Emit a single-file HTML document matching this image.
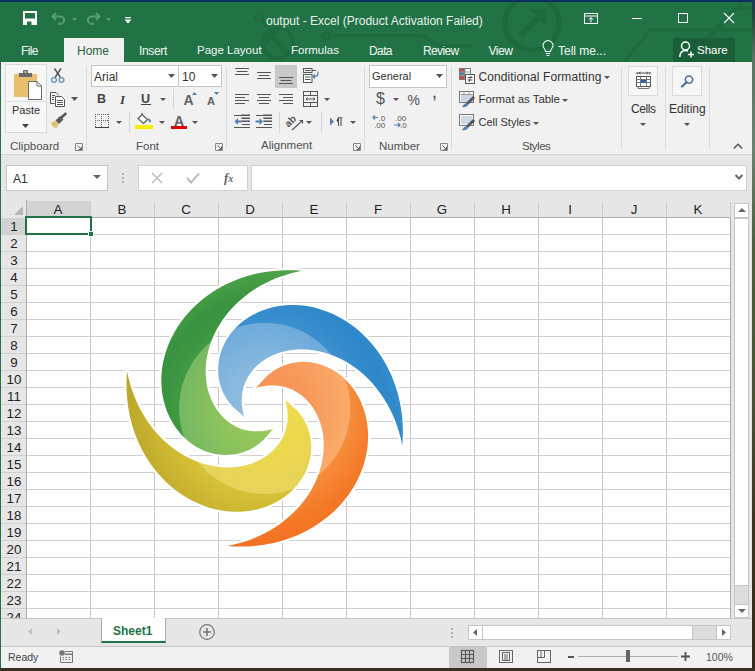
<!DOCTYPE html>
<html><head><meta charset="utf-8">
<style>
*{box-sizing:border-box;margin:0;padding:0}
html,body{width:755px;height:671px;overflow:hidden;background:#2f3a2c;font-family:"Liberation Sans",sans-serif}
.a{position:absolute}
.t{position:absolute;white-space:nowrap;line-height:1}
svg{position:absolute;overflow:visible}
</style></head><body>
<!-- desktop strips -->
<div class="a" style="left:0;top:0;width:755px;height:2px;background:#0d2f5e"></div>
<div class="a" style="left:752px;top:0;width:3px;height:671px;background:linear-gradient(#1a3a5a 0px,#24443a 15px,#5d7565 60px,#6b8070 150px,#4c5e3e 250px,#4a5236 400px,#3c3424 520px,#33291c 671px)"></div>
<div class="a" style="left:0;top:668px;width:755px;height:3px;background:#3a3122"></div>

<!-- window -->
<div class="a" id="win" style="left:0;top:2px;width:752px;height:666px;background:#e6e6e6;overflow:hidden">
</div>


<!-- title bar -->
<div class="a" style="left:0;top:2px;width:752px;height:60px;background:#217346;overflow:hidden">
<svg style="left:0;top:-2px" width="752" height="62" viewBox="0 0 752 62">
 <g fill="none" stroke="#1e6b40" stroke-width="3">
  <circle cx="532" cy="23" r="27" stroke-width="5" stroke="#1c6a3e"/>
  <path d="M521 35 L538 18" stroke-width="6" stroke="#1c6a3e"/>
  <path d="M529 9 H546 V26 Z" fill="#1c6a3e" stroke="none"/>
  <circle cx="259" cy="17" r="3.5"/>
  <path d="M261.5 19.5 L268 28" />
  <circle cx="278" cy="43" r="15" stroke-width="4"/>
  <path d="M290 55 L272 37" stroke-width="5"/>
  <path d="M266 31 H279 L266 44 Z" fill="#1e6b40" stroke="none"/>
  <circle cx="327" cy="35.5" r="3"/>
  <path d="M330 35.5 H423 L438 46 H472" />
  <path d="M624 62 L650 30 H752" />
  <path d="M690 62 L735 8 H752" />
  <path d="M705 40 L745 0" />
 </g>
</svg>
</div>
<div class="a" style="left:0;top:2px;width:1px;height:666px;background:#217346"></div>
<!-- QAT -->
<svg style="left:23px;top:11px" width="14" height="14" viewBox="0 0 14 14">
 <path d="M0 0 H14 V14 H0 Z M2 2 V7.5 H12 V2 Z M4 10.5 V14 H8.5 V10.5 Z" fill="#fff" fill-rule="evenodd"/>
</svg>
<svg style="left:51px;top:12px" width="26" height="13" viewBox="0 0 26 13">
 <path d="M5 1 L1.5 4.5 L5 8 M2 4.5 H9.5 A3.6 3.6 0 0 1 9.5 11.7 H7" fill="none" stroke="#5a9c75" stroke-width="2"/>
 <path d="M21 6 H26 L23.5 9 Z" fill="#5a9c75"/>
</svg>
<svg style="left:86px;top:12px" width="26" height="13" viewBox="0 0 26 13">
 <path d="M10 1 L13.5 4.5 L10 8 M13 4.5 H5.5 A3.6 3.6 0 0 0 5.5 11.7 H8" fill="none" stroke="#5a9c75" stroke-width="2"/>
 <path d="M20 6 H25 L22.5 9 Z" fill="#5a9c75"/>
</svg>
<svg style="left:124px;top:16px" width="8" height="8" viewBox="0 0 8 8">
 <rect x="1" y="1" width="6" height="1.3" fill="#fff"/>
 <path d="M0.5 3.5 H7.5 L4 7.5 Z" fill="#fff"/>
</svg>
<div class="t" style="left:266px;top:15px;font-size:12px;color:#e9f1ec">output - Excel (Product Activation Failed)</div>
<!-- window controls -->
<svg style="left:584px;top:13px" width="14" height="11" viewBox="0 0 14 11">
 <rect x="0.5" y="0.5" width="13" height="10" fill="none" stroke="#fff" stroke-width="1"/>
 <path d="M0.5 3 H13.5" stroke="#fff" stroke-width="1"/>
 <path d="M7 9.5 V4.5 M4.8 6.7 L7 4.5 L9.2 6.7" fill="none" stroke="#fff" stroke-width="1"/>
</svg>
<div class="a" style="left:632px;top:18px;width:10px;height:1px;background:#fff"></div>
<div class="a" style="left:678px;top:13px;width:10px;height:10px;border:1px solid #fff"></div>
<svg style="left:724px;top:13px" width="10" height="10" viewBox="0 0 10 10">
 <path d="M0 0 L10 10 M10 0 L0 10" stroke="#fff" stroke-width="1.1"/>
</svg>
<!-- tabs -->
<div class="a" style="left:64px;top:38px;width:60px;height:24px;background:#f1f1f1"></div>
<div class="t" style="left:21px;top:44.5px;font-size:12px;letter-spacing:-0.6px;color:#f2f7f4">File</div>
<div class="t" style="left:77px;top:44.5px;font-size:12px;color:#2a6040">Home</div>
<div class="t" style="left:139px;top:44.5px;font-size:12px;letter-spacing:-0.35px;color:#f2f7f4">Insert</div>
<div class="t" style="left:197px;top:44.5px;font-size:11.5px;color:#f2f7f4">Page Layout</div>
<div class="t" style="left:291px;top:44.5px;font-size:11.5px;color:#f2f7f4">Formulas</div>
<div class="t" style="left:369px;top:44.5px;font-size:12px;letter-spacing:-0.6px;color:#f2f7f4">Data</div>
<div class="t" style="left:423px;top:44.5px;font-size:12px;letter-spacing:-0.65px;color:#f2f7f4">Review</div>
<div class="t" style="left:488.5px;top:44.5px;font-size:12px;letter-spacing:-0.5px;color:#f2f7f4">View</div>
<svg style="left:542px;top:41px" width="12" height="16" viewBox="0 0 12 16">
 <path d="M3.5 10.5 C3.5 8 1 7 1 4.6 A5 5 0 0 1 11 4.6 C11 7 8.5 8 8.5 10.5 Z" fill="none" stroke="#f2f7f4" stroke-width="1.1"/>
 <path d="M3.8 12.5 H8.2 M4.5 14.5 H7.5" stroke="#f2f7f4" stroke-width="1.1"/>
</svg>
<div class="t" style="left:558px;top:44.5px;font-size:12px;color:#f2f7f4">Tell me...</div>
<div class="a" style="left:673px;top:38px;width:62px;height:24px;background:#1a5f38"></div>
<svg style="left:679px;top:41px" width="16" height="17" viewBox="0 0 16 17">
 <circle cx="6.5" cy="5" r="4" fill="none" stroke="#fff" stroke-width="1.5"/>
 <path d="M0.8 16 C1 11.5 3.2 9.5 6.5 9.5 C7.5 9.5 8.3 9.7 9 10" fill="none" stroke="#fff" stroke-width="1.5"/>
 <path d="M12 10.5 V16.5 M9 13.5 H15" stroke="#fff" stroke-width="1.5"/>
</svg>
<div class="t" style="left:697px;top:44.5px;font-size:11.5px;color:#fff">Share</div>


<!-- ribbon -->
<div class="a" style="left:1px;top:62px;width:751px;height:92px;background:#f1f1f1"></div>
<div class="a" style="left:1px;top:154px;width:751px;height:1px;background:#d5d5d5"></div>
<!-- group separators -->
<div class="a" style="left:86px;top:66px;width:1px;height:84px;background:#dcdcdc"></div>
<div class="a" style="left:226px;top:66px;width:1px;height:84px;background:#dcdcdc"></div>
<div class="a" style="left:364px;top:66px;width:1px;height:84px;background:#dcdcdc"></div>
<div class="a" style="left:451px;top:66px;width:1px;height:84px;background:#dcdcdc"></div>
<div class="a" style="left:621px;top:66px;width:1px;height:84px;background:#dcdcdc"></div>
<div class="a" style="left:665px;top:66px;width:1px;height:84px;background:#dcdcdc"></div>
<div class="a" style="left:709px;top:66px;width:1px;height:84px;background:#dcdcdc"></div>
<!-- group labels -->
<div class="t" style="left:10px;top:141px;font-size:11.5px;color:#505050">Clipboard</div>
<div class="t" style="left:136px;top:141px;font-size:11.5px;color:#505050">Font</div>
<div class="t" style="left:261px;top:140px;font-size:11.5px;color:#505050">Alignment</div>
<div class="t" style="left:379px;top:140.5px;font-size:11.5px;color:#505050">Number</div>
<div class="t" style="left:522px;top:141px;font-size:11.5px;letter-spacing:-0.5px;color:#505050">Styles</div>
<!-- dialog launchers -->
<svg style="left:75px;top:143px" width="8" height="8" viewBox="0 0 8 8"><path d="M0.5 7.5 V0.5 H7.5 V7.5 Z" fill="none" stroke="#8a8a8a" stroke-width="1"/><path d="M2.5 2.5 L6.5 6.5 M3.5 6.5 H6.5 V3.5" fill="none" stroke="#666" stroke-width="1"/></svg>
<svg style="left:215px;top:143px" width="8" height="8" viewBox="0 0 8 8"><path d="M0.5 7.5 V0.5 H7.5 V7.5 Z" fill="none" stroke="#8a8a8a" stroke-width="1"/><path d="M2.5 2.5 L6.5 6.5 M3.5 6.5 H6.5 V3.5" fill="none" stroke="#666" stroke-width="1"/></svg>
<svg style="left:353px;top:143px" width="8" height="8" viewBox="0 0 8 8"><path d="M0.5 7.5 V0.5 H7.5 V7.5 Z" fill="none" stroke="#8a8a8a" stroke-width="1"/><path d="M2.5 2.5 L6.5 6.5 M3.5 6.5 H6.5 V3.5" fill="none" stroke="#666" stroke-width="1"/></svg>
<svg style="left:440px;top:143px" width="8" height="8" viewBox="0 0 8 8"><path d="M0.5 7.5 V0.5 H7.5 V7.5 Z" fill="none" stroke="#8a8a8a" stroke-width="1"/><path d="M2.5 2.5 L6.5 6.5 M3.5 6.5 H6.5 V3.5" fill="none" stroke="#666" stroke-width="1"/></svg>
<!-- collapse -->
<svg style="left:733px;top:143px" width="10" height="6" viewBox="0 0 10 6"><path d="M0.8 5.5 L5 1.2 L9.2 5.5" fill="none" stroke="#555" stroke-width="1.5"/></svg>

<!-- Clipboard -->
<div class="a" style="left:5px;top:64px;width:42px;height:69px;border:1px solid #d9d9d9;background:#f7f7f7"></div>
<div class="a" style="left:6px;top:101px;width:40px;height:1px;background:#dedede"></div>
<svg style="left:13px;top:69px" width="30" height="32" viewBox="0 0 30 32">
 <rect x="1" y="5" width="23" height="23" rx="1" fill="#e8bf6a"/>
 <path d="M6 4 H19 V8 H6 Z" fill="#6b6b6b"/>
 <rect x="10" y="1" width="5" height="4" rx="1" fill="#6b6b6b"/>
 <rect x="11.5" y="2" width="2" height="2" fill="#e8bf6a"/>
 <path d="M15.5 12.5 H24 L28.5 17 V30.5 H15.5 Z" fill="#fff" stroke="#6b6b6b" stroke-width="1"/>
 <path d="M24 12.5 V17 H28.5" fill="none" stroke="#6b6b6b" stroke-width="1"/>
</svg>
<div class="t" style="left:12px;top:105px;font-size:11px;color:#333">Paste</div>
<svg style="left:22px;top:124px" width="7" height="4" viewBox="0 0 7 4"><path d="M0 0 H7 L3.5 4 Z" fill="#444"/></svg>
<svg style="left:50px;top:68px" width="16" height="16" viewBox="0 0 16 16">
 <path d="M4.5 0.5 L10.5 9.5 M11 0.5 L5 9.5" stroke="#555" stroke-width="1.4"/>
 <circle cx="4" cy="12" r="2.4" fill="none" stroke="#6d8fb5" stroke-width="1.3"/>
 <circle cx="11.5" cy="12" r="2.4" fill="none" stroke="#6d8fb5" stroke-width="1.3"/>
</svg>
<svg style="left:50px;top:92px" width="16" height="15" viewBox="0 0 16 15">
 <path d="M0.5 0.5 H6 L8 2.5 V3.5 M0.5 0.5 V11.5 H4.5" fill="none" stroke="#555" stroke-width="1"/>
 <path d="M5.5 4.5 H11.5 L14.5 7.5 V14.5 H5.5 Z" fill="#fff" stroke="#555" stroke-width="1"/>
 <path d="M2 3.5 H5 M2 5.5 H4 M2 7.5 H4 M7 8.5 H13 M7 10.5 H13 M7 12.5 H13" stroke="#555" stroke-width="1"/>
</svg>
<svg style="left:71px;top:97px" width="7" height="4" viewBox="0 0 7 4"><path d="M0 0 H7 L3.5 4 Z" fill="#555"/></svg>
<svg style="left:50px;top:113px" width="17" height="16" viewBox="0 0 17 16">
 <path d="M11.5 4.5 L15.5 0.8" stroke="#555" stroke-width="2.6" stroke-linecap="round"/>
 <path d="M5.5 7.5 L10 3 L13.5 6.5 L9 11 Z" fill="#5a5a5a"/>
 <path d="M0.5 10 L5.5 7.5 L9 11 L6.5 15.5 C4 15 2 13 0.5 10 Z" fill="#e6c47f"/>
 <path d="M3 12 L7 9" stroke="#d2ad63" stroke-width="1"/>
</svg>


<!-- Font group -->
<div class="a" style="left:91px;top:65px;width:88px;height:22px;border:1px solid #c6c6c6;background:#fff"></div>
<div class="a" style="left:178px;top:65px;width:44px;height:22px;border:1px solid #c6c6c6;background:#fff"></div>
<div class="t" style="left:94px;top:71px;font-size:12px;color:#333">Arial</div>
<div class="t" style="left:182px;top:71px;font-size:12px;color:#333">10</div>
<svg style="left:168px;top:74px" width="7" height="4" viewBox="0 0 7 4"><path d="M0 0 H7 L3.5 4 Z" fill="#555"/></svg>
<svg style="left:211px;top:74px" width="7" height="4" viewBox="0 0 7 4"><path d="M0 0 H7 L3.5 4 Z" fill="#555"/></svg>
<div class="t" style="left:97px;top:93px;font-size:12.5px;font-weight:700;color:#444">B</div>
<div class="t" style="left:120px;top:93px;font-size:13px;font-style:italic;font-family:'Liberation Serif';font-weight:700;color:#444">I</div>
<div class="t" style="left:141px;top:92.5px;font-size:12.5px;font-weight:700;color:#444">U</div>
<div class="a" style="left:141px;top:104px;width:10px;height:1px;background:#444"></div>
<svg style="left:160px;top:98px" width="6" height="3" viewBox="0 0 6 3"><path d="M0 0 H6 L3 3 Z" fill="#555"/></svg>
<div class="a" style="left:173px;top:89px;width:1px;height:20px;background:#d6d6d6"></div>
<div class="t" style="left:183.5px;top:93px;font-size:14px;font-weight:700;color:#606060">A</div>
<svg style="left:192px;top:92px" width="5" height="3" viewBox="0 0 5 3"><path d="M0 3 H5 L2.5 0 Z" fill="#4f7fb0"/></svg>
<div class="t" style="left:207px;top:96px;font-size:11px;font-weight:700;color:#606060">A</div>
<svg style="left:214px;top:92px" width="5" height="3" viewBox="0 0 5 3"><path d="M0 0 H5 L2.5 3 Z" fill="#4f7fb0"/></svg>
<svg style="left:95px;top:114px" width="14" height="14" viewBox="0 0 14 14"><g fill="#666"><rect x="0" y="0" width="1" height="1"/><rect x="0" y="0" width="1" height="1"/><rect x="0" y="6" width="1" height="1"/><rect x="6" y="0" width="1" height="1"/><rect x="0" y="13" width="1" height="1"/><rect x="13" y="0" width="1" height="1"/><rect x="2" y="0" width="1" height="1"/><rect x="0" y="2" width="1" height="1"/><rect x="2" y="6" width="1" height="1"/><rect x="6" y="2" width="1" height="1"/><rect x="2" y="13" width="1" height="1"/><rect x="13" y="2" width="1" height="1"/><rect x="4" y="0" width="1" height="1"/><rect x="0" y="4" width="1" height="1"/><rect x="4" y="6" width="1" height="1"/><rect x="6" y="4" width="1" height="1"/><rect x="4" y="13" width="1" height="1"/><rect x="13" y="4" width="1" height="1"/><rect x="6" y="0" width="1" height="1"/><rect x="0" y="6" width="1" height="1"/><rect x="6" y="6" width="1" height="1"/><rect x="6" y="6" width="1" height="1"/><rect x="6" y="13" width="1" height="1"/><rect x="13" y="6" width="1" height="1"/><rect x="8" y="0" width="1" height="1"/><rect x="0" y="8" width="1" height="1"/><rect x="8" y="6" width="1" height="1"/><rect x="6" y="8" width="1" height="1"/><rect x="8" y="13" width="1" height="1"/><rect x="13" y="8" width="1" height="1"/><rect x="10" y="0" width="1" height="1"/><rect x="0" y="10" width="1" height="1"/><rect x="10" y="6" width="1" height="1"/><rect x="6" y="10" width="1" height="1"/><rect x="10" y="13" width="1" height="1"/><rect x="13" y="10" width="1" height="1"/><rect x="12" y="0" width="1" height="1"/><rect x="0" y="12" width="1" height="1"/><rect x="12" y="6" width="1" height="1"/><rect x="6" y="12" width="1" height="1"/><rect x="12" y="13" width="1" height="1"/><rect x="13" y="12" width="1" height="1"/></g><rect x="0" y="13" width="14" height="1" fill="#444"/></svg>
<svg style="left:116px;top:121px" width="6" height="3" viewBox="0 0 6 3"><path d="M0 0 H6 L3 3 Z" fill="#555"/></svg>
<div class="a" style="left:129px;top:112px;width:1px;height:21px;background:#d6d6d6"></div>
<svg style="left:137px;top:113px" width="17" height="12" viewBox="0 0 17 12">
 <path d="M5 1.5 L10.5 6.5 L6.5 10.5 L1 5.5 Z" fill="#fff" stroke="#555" stroke-width="1.1"/>
 <path d="M5 1.5 V0" stroke="#555" stroke-width="1.1"/>
 <path d="M11 5 C13 6 14.5 7.5 14 9 C13 9.5 12 9 11.5 8 Z" fill="#4f7fb0"/>
</svg>
<div class="a" style="left:135px;top:125px;width:18px;height:4px;background:#f5f000"></div>
<svg style="left:159px;top:121px" width="6" height="3" viewBox="0 0 6 3"><path d="M0 0 H6 L3 3 Z" fill="#555"/></svg>
<div class="t" style="left:174px;top:113.5px;font-size:14px;font-weight:700;color:#606060">A</div>
<div class="a" style="left:171px;top:126px;width:16px;height:3px;background:#e00000"></div>
<svg style="left:192px;top:121px" width="6" height="3" viewBox="0 0 6 3"><path d="M0 0 H6 L3 3 Z" fill="#555"/></svg>

<!-- Alignment group -->
<svg style="left:234px;top:67px" width="100" height="66" viewBox="0 0 100 66">
 <g stroke="#555" stroke-width="1.2" fill="none">
  <path d="M1 1.5 H15 M2.5 4.5 H13.5 M1 7.5 H15"/>
  <path d="M23 5.5 H37 M24.5 8.5 H35.5 M23 11.5 H37"/>
  <path d="M1 27.5 H15 M1 30.5 H11 M1 33.5 H15 M1 36.5 H11"/>
  <path d="M23 27.5 H37 M25 30.5 H35 M23 33.5 H37 M25 36.5 H35"/>
  <path d="M45 27.5 H59 M49 30.5 H59 M45 33.5 H59 M49 36.5 H59"/>
  <path d="M7 48 H16 M7 51 H16 M7 54 H16 M0 60.5 H16 M0 47 V47"/>
  <path d="M29 48 H38 M29 51 H38 M29 54 H38 M22 60.5 H38"/>
 </g>
</svg>
<div class="a" style="left:275px;top:65px;width:22px;height:23px;background:#c8c8c8"></div>
<svg style="left:278px;top:76px" width="16" height="10" viewBox="0 0 16 10"><path d="M1 1.5 H15 M2.5 4.5 H13.5 M1 7.5 H15" stroke="#555" stroke-width="1.2"/></svg>
<svg style="left:234px;top:67px" width="100" height="66" viewBox="0 0 100 66">
 <g stroke="#555" stroke-width="1.2" fill="none">
  <path d="M0 48.5 H16 M0 60.5 H16 M8 51.5 H16 M8 54.5 H16 M8 57.5 H16"/>
  <path d="M22 48.5 H38 M22 60.5 H38 M30 51.5 H38 M30 54.5 H38 M30 57.5 H38"/>
 </g>
 <path d="M0.5 54.5 L4 51 V58 Z" fill="#4f7fb0"/>
 <path d="M3 54.5 H7.5" stroke="#4f7fb0" stroke-width="2"/>
 <path d="M29 54.5 L25.5 51 V58 Z" fill="#4f7fb0"/>
 <path d="M21.5 54.5 H26" stroke="#4f7fb0" stroke-width="2"/>
</svg>
<svg style="left:303px;top:68px" width="16" height="15" viewBox="0 0 16 15">
 <rect x="0.5" y="0.5" width="8.5" height="4" fill="none" stroke="#555" stroke-width="1"/>
 <rect x="0.5" y="6.5" width="8.5" height="8" fill="#fff" stroke="#555" stroke-width="1"/>
 <path d="M2 2.5 H7.5 M9 2.5 H13 M2 9 H7.5 M2 11.5 H7.5" stroke="#555" stroke-width="1"/>
 <path d="M15 3.5 V5.5 C15 7.5 13.5 8.5 12 8.5 H10 M12 6.5 L10 8.5 L12 10.5" fill="none" stroke="#4f7fb0" stroke-width="1.2"/>
</svg>
<svg style="left:303px;top:91px" width="16" height="16" viewBox="0 0 16 16">
 <rect x="0.5" y="0.5" width="14" height="15" fill="none" stroke="#555" stroke-width="1"/>
 <path d="M0.5 4.5 H14.5 M0.5 11.5 H14.5 M7.5 0.5 V4.5 M7.5 11.5 V15.5" stroke="#555" stroke-width="1"/>
 <path d="M3 8 H12 M4.5 6.5 L3 8 L4.5 9.5 M10.5 6.5 L12 8 L10.5 9.5" fill="none" stroke="#555" stroke-width="1"/>
</svg>
<svg style="left:324px;top:98px" width="6" height="3" viewBox="0 0 6 3"><path d="M0 0 H6 L3 3 Z" fill="#555"/></svg>
<div class="a" style="left:279px;top:112px;width:1px;height:21px;background:#d6d6d6"></div>
<svg style="left:286px;top:114px" width="18" height="16" viewBox="0 0 18 16">
 <text x="-1.5" y="10" font-family="Liberation Sans" font-size="10" font-weight="700" fill="#555" transform="rotate(-45 5 7)">ab</text>
 <path d="M6 16 L16.5 6.5 M13.5 6.5 H16.5 V9.5" fill="none" stroke="#555" stroke-width="1.1"/>
</svg>
<svg style="left:306px;top:121px" width="6" height="3" viewBox="0 0 6 3"><path d="M0 0 H6 L3 3 Z" fill="#555"/></svg>
<div class="a" style="left:321px;top:112px;width:1px;height:21px;background:#d6d6d6"></div>
<svg style="left:330px;top:117px" width="14" height="9" viewBox="0 0 14 9">
 <path d="M0 0.5 L4 4.5 L0 8.5 Z" fill="#4f7fb0"/>
 <path d="M8.5 1 A2.3 2.3 0 0 0 8.5 5.5 Z" fill="#555"/>
 <path d="M8.5 0.8 V9 M11 0.8 V9 M8 0.8 H12.5" stroke="#555" stroke-width="1.1"/>
</svg>
<svg style="left:350px;top:121px" width="6" height="3" viewBox="0 0 6 3"><path d="M0 0 H6 L3 3 Z" fill="#555"/></svg>


<!-- Number group -->
<div class="a" style="left:369px;top:65px;width:78px;height:23px;border:1px solid #c6c6c6;background:#fff"></div>
<div class="t" style="left:372px;top:71px;font-size:11px;color:#333">General</div>
<svg style="left:436px;top:74px" width="7" height="4" viewBox="0 0 7 4"><path d="M0 0 H7 L3.5 4 Z" fill="#555"/></svg>
<div class="t" style="left:376px;top:91px;font-size:16px;color:#555">$</div>
<svg style="left:393px;top:98px" width="6" height="3" viewBox="0 0 6 3"><path d="M0 0 H6 L3 3 Z" fill="#555"/></svg>
<div class="t" style="left:407.5px;top:93px;font-size:14px;color:#555">%</div>
<div class="t" style="left:432.5px;top:86px;font-size:14px;font-weight:700;color:#555">,</div>
<svg style="left:372px;top:114px" width="38" height="15" viewBox="0 0 38 15">
 <path d="M1 3.5 H6 M3 1.5 L1 3.5 L3 5.5" fill="none" stroke="#4f7fb0" stroke-width="1.2"/>
 <text x="6.5" y="7" font-family="Liberation Sans" font-size="8" fill="#555">.0</text>
 <text x="2" y="14" font-family="Liberation Sans" font-size="8" fill="#555">.00</text>
 <text x="23" y="7" font-family="Liberation Sans" font-size="8" fill="#555">.00</text>
 <path d="M22 11 H28 M26 9 L28 11 L26 13" fill="none" stroke="#4f7fb0" stroke-width="1.2"/>
 <text x="28" y="14" font-family="Liberation Sans" font-size="8" fill="#555">.0</text>
</svg>

<!-- Styles group -->
<svg style="left:459px;top:68px" width="16" height="16" viewBox="0 0 16 16">
 <rect x="0.5" y="0.5" width="11" height="11" fill="#fff" stroke="#777" stroke-width="1"/>
 <rect x="1" y="1" width="5" height="3" fill="#c0504d"/>
 <rect x="1" y="4" width="5" height="3" fill="#4f7fb0"/>
 <rect x="1" y="7" width="5" height="4" fill="#c0504d"/>
 <path d="M6 0.5 V11.5 M0.5 4 H11.5 M0.5 7.5 H11.5" stroke="#999" stroke-width="1"/>
 <rect x="6.5" y="6.5" width="9" height="9" fill="#fff" stroke="#555" stroke-width="1"/>
 <path d="M8.5 9.5 H13.5 M8.5 12 H13.5 M12 8 L10 14" stroke="#555" stroke-width="1"/>
</svg>
<div class="t" style="left:478.5px;top:71px;font-size:12px;letter-spacing:0.1px;color:#333">Conditional Formatting</div>
<svg style="left:604px;top:76px" width="6" height="3" viewBox="0 0 6 3"><path d="M0 0 H6 L3 3 Z" fill="#555"/></svg>
<svg style="left:459px;top:91px" width="16" height="17" viewBox="0 0 16 17">
 <rect x="0.5" y="0.5" width="14" height="11" fill="#fff" stroke="#777" stroke-width="1"/>
 <path d="M0.5 3.5 H14.5 M5 0.5 V11.5 M10 0.5 V11.5" stroke="#999" stroke-width="1"/>
 <path d="M2 4 H14 V11 H2 Z" fill="#c9d7e6"/>
 <path d="M14 5 L16 7 L9 14 L7 12 Z" fill="#555"/>
 <path d="M7 12 L9 14 C8 16 5 16.5 3 16 C4 15 4.5 13 7 12 Z" fill="#4f7fb0"/>
</svg>
<div class="t" style="left:478.5px;top:94px;font-size:11.4px;color:#333">Format as Table</div>
<svg style="left:562px;top:99px" width="6" height="3" viewBox="0 0 6 3"><path d="M0 0 H6 L3 3 Z" fill="#555"/></svg>
<svg style="left:459px;top:114px" width="16" height="17" viewBox="0 0 16 17">
 <rect x="0.5" y="0.5" width="14" height="11" fill="#fff" stroke="#777" stroke-width="1"/>
 <path d="M2 2 H13 V10 H2 Z" fill="#c9d7e6"/>
 <path d="M14 5 L16 7 L9 14 L7 12 Z" fill="#555"/>
 <path d="M7 12 L9 14 C8 16 5 16.5 3 16 C4 15 4.5 13 7 12 Z" fill="#4f7fb0"/>
</svg>
<div class="t" style="left:478.5px;top:117px;font-size:11px;color:#333">Cell Styles</div>
<svg style="left:533px;top:122px" width="6" height="3" viewBox="0 0 6 3"><path d="M0 0 H6 L3 3 Z" fill="#555"/></svg>

<!-- Cells / Editing -->
<div class="a" style="left:628px;top:66px;width:30px;height:30px;border:1px solid #d9d9d9;background:#f7f7f7"></div>
<svg style="left:636px;top:72px" width="16" height="17" viewBox="0 0 16 17">
 <path d="M1 1 H14 M1 0 V2.5 M14 0 V2.5 M3 1 L4.5 0 M3 1 L4.5 2 M12 1 L10.5 0 M12 1 L10.5 2" stroke="#555" stroke-width="1" fill="none"/>
 <rect x="0.5" y="4.5" width="14" height="10" fill="#fff" stroke="#555" stroke-width="1"/>
 <path d="M0.5 7.5 H14.5 M0.5 10.5 H14.5 M4.5 4.5 V14.5 M10.5 4.5 V14.5" stroke="#777" stroke-width="1"/>
 <rect x="5" y="8" width="5" height="3" fill="#2f5f9e"/>
 <path d="M2 14.5 V16.5 H13 V14.5" fill="none" stroke="#777" stroke-width="1"/>
</svg>
<div class="t" style="left:631px;top:103px;font-size:12px;letter-spacing:-0.4px;color:#333">Cells</div>
<svg style="left:640px;top:123px" width="6" height="3" viewBox="0 0 6 3"><path d="M0 0 H6 L3 3 Z" fill="#555"/></svg>
<div class="a" style="left:672px;top:66px;width:30px;height:30px;border:1px solid #d9d9d9;background:#f7f7f7"></div>
<svg style="left:681px;top:75px" width="13" height="12" viewBox="0 0 13 12">
 <circle cx="8" cy="4.6" r="3.6" fill="none" stroke="#4f6f96" stroke-width="1.6"/>
 <path d="M5.5 7.2 L1 11.5" stroke="#4f6f96" stroke-width="2.2" stroke-linecap="round"/>
</svg>
<div class="t" style="left:669px;top:103px;font-size:12px;color:#333">Editing</div>
<svg style="left:684px;top:123px" width="6" height="3" viewBox="0 0 6 3"><path d="M0 0 H6 L3 3 Z" fill="#555"/></svg>


<!-- formula bar -->
<div class="a" style="left:1px;top:155px;width:751px;height:513px;background:#e6e6e6"></div>
<div class="a" style="left:6px;top:165px;width:102px;height:26px;border:1px solid #c6c6c6;background:#fff"></div>
<div class="t" style="left:13px;top:173px;font-size:12px;color:#333">A1</div>
<svg style="left:93px;top:175px" width="8" height="4" viewBox="0 0 8 4"><path d="M0 0 H8 L4 4 Z" fill="#666"/></svg>
<div class="a" style="left:122px;top:173px;width:2px;height:2px;background:#b0b0b0"></div>
<div class="a" style="left:122px;top:177px;width:2px;height:2px;background:#b0b0b0"></div>
<div class="a" style="left:122px;top:181px;width:2px;height:2px;background:#b0b0b0"></div>
<div class="a" style="left:138px;top:165px;width:110px;height:26px;border:1px solid #d2d2d2;background:#fff"></div>
<svg style="left:151px;top:172px" width="12" height="12" viewBox="0 0 12 12"><path d="M1 1 L11 11 M11 1 L1 11" stroke="#bcbcbc" stroke-width="1.5"/></svg>
<svg style="left:186px;top:172px" width="14" height="12" viewBox="0 0 14 12"><path d="M1 6 L5 10.5 L13 1.5" fill="none" stroke="#bcbcbc" stroke-width="2"/></svg>
<div class="t" style="left:224px;top:171px;font-size:13px;font-style:italic;font-family:'Liberation Serif';font-weight:700;color:#666">f<span style="font-size:10px">x</span></div>
<div class="a" style="left:251px;top:165px;width:496px;height:26px;border:1px solid #d2d2d2;background:#fff"></div>
<svg style="left:734px;top:174px" width="10" height="6" viewBox="0 0 10 6"><path d="M1.5 1 L5 4.5 L8.5 1" fill="none" stroke="#666" stroke-width="2"/></svg>

<!-- grid -->
<div class="a" style="left:1px;top:200px;width:730px;height:418px;background:#fff;overflow:hidden">

<div class="a" style="left:0;top:0;width:730px;height:18px;background:#e6e6e6;border-bottom:1px solid #ababab"></div>
<div class="a" style="left:0;top:0;width:26px;height:418px;background:#e6e6e6;border-right:1px solid #ababab"></div>
<div class="a" style="left:26px;top:1px;width:64px;height:17px;background:#d2d2d2;border-bottom:1px solid #ababab"></div>
<div class="a" style="left:0;top:18px;width:25px;height:16px;background:#d2d2d2"></div>
<svg style="left:13px;top:6px" width="10" height="10" viewBox="0 0 10 10"><path d="M9 0 V9 H0 Z" fill="#b8b8b8"/></svg>
<div class="a" style="left:89px;top:18px;width:1px;height:400px;background:#c6c6c6"></div>
<div class="a" style="left:89px;top:2px;width:1px;height:16px;background:#cdcdcd"></div>
<div class="a" style="left:153px;top:18px;width:1px;height:400px;background:#c6c6c6"></div>
<div class="a" style="left:153px;top:2px;width:1px;height:16px;background:#cdcdcd"></div>
<div class="a" style="left:217px;top:18px;width:1px;height:400px;background:#c6c6c6"></div>
<div class="a" style="left:217px;top:2px;width:1px;height:16px;background:#cdcdcd"></div>
<div class="a" style="left:281px;top:18px;width:1px;height:400px;background:#c6c6c6"></div>
<div class="a" style="left:281px;top:2px;width:1px;height:16px;background:#cdcdcd"></div>
<div class="a" style="left:345px;top:18px;width:1px;height:400px;background:#c6c6c6"></div>
<div class="a" style="left:345px;top:2px;width:1px;height:16px;background:#cdcdcd"></div>
<div class="a" style="left:409px;top:18px;width:1px;height:400px;background:#c6c6c6"></div>
<div class="a" style="left:409px;top:2px;width:1px;height:16px;background:#cdcdcd"></div>
<div class="a" style="left:473px;top:18px;width:1px;height:400px;background:#c6c6c6"></div>
<div class="a" style="left:473px;top:2px;width:1px;height:16px;background:#cdcdcd"></div>
<div class="a" style="left:537px;top:18px;width:1px;height:400px;background:#c6c6c6"></div>
<div class="a" style="left:537px;top:2px;width:1px;height:16px;background:#cdcdcd"></div>
<div class="a" style="left:601px;top:18px;width:1px;height:400px;background:#c6c6c6"></div>
<div class="a" style="left:601px;top:2px;width:1px;height:16px;background:#cdcdcd"></div>
<div class="a" style="left:665px;top:18px;width:1px;height:400px;background:#c6c6c6"></div>
<div class="a" style="left:665px;top:2px;width:1px;height:16px;background:#cdcdcd"></div>
<div class="a" style="left:729px;top:18px;width:1px;height:400px;background:#c6c6c6"></div>
<div class="a" style="left:729px;top:2px;width:1px;height:16px;background:#cdcdcd"></div>
<div class="a" style="left:26px;top:34px;width:704px;height:1px;background:#cfcfcf"></div>
<div class="a" style="left:0;top:34px;width:25px;height:1px;background:#d0d0d0"></div>
<div class="a" style="left:26px;top:51px;width:704px;height:1px;background:#cfcfcf"></div>
<div class="a" style="left:0;top:51px;width:25px;height:1px;background:#d0d0d0"></div>
<div class="a" style="left:26px;top:68px;width:704px;height:1px;background:#cfcfcf"></div>
<div class="a" style="left:0;top:68px;width:25px;height:1px;background:#d0d0d0"></div>
<div class="a" style="left:26px;top:85px;width:704px;height:1px;background:#cfcfcf"></div>
<div class="a" style="left:0;top:85px;width:25px;height:1px;background:#d0d0d0"></div>
<div class="a" style="left:26px;top:102px;width:704px;height:1px;background:#cfcfcf"></div>
<div class="a" style="left:0;top:102px;width:25px;height:1px;background:#d0d0d0"></div>
<div class="a" style="left:26px;top:119px;width:704px;height:1px;background:#cfcfcf"></div>
<div class="a" style="left:0;top:119px;width:25px;height:1px;background:#d0d0d0"></div>
<div class="a" style="left:26px;top:136px;width:704px;height:1px;background:#cfcfcf"></div>
<div class="a" style="left:0;top:136px;width:25px;height:1px;background:#d0d0d0"></div>
<div class="a" style="left:26px;top:153px;width:704px;height:1px;background:#cfcfcf"></div>
<div class="a" style="left:0;top:153px;width:25px;height:1px;background:#d0d0d0"></div>
<div class="a" style="left:26px;top:170px;width:704px;height:1px;background:#cfcfcf"></div>
<div class="a" style="left:0;top:170px;width:25px;height:1px;background:#d0d0d0"></div>
<div class="a" style="left:26px;top:187px;width:704px;height:1px;background:#cfcfcf"></div>
<div class="a" style="left:0;top:187px;width:25px;height:1px;background:#d0d0d0"></div>
<div class="a" style="left:26px;top:204px;width:704px;height:1px;background:#cfcfcf"></div>
<div class="a" style="left:0;top:204px;width:25px;height:1px;background:#d0d0d0"></div>
<div class="a" style="left:26px;top:221px;width:704px;height:1px;background:#cfcfcf"></div>
<div class="a" style="left:0;top:221px;width:25px;height:1px;background:#d0d0d0"></div>
<div class="a" style="left:26px;top:238px;width:704px;height:1px;background:#cfcfcf"></div>
<div class="a" style="left:0;top:238px;width:25px;height:1px;background:#d0d0d0"></div>
<div class="a" style="left:26px;top:255px;width:704px;height:1px;background:#cfcfcf"></div>
<div class="a" style="left:0;top:255px;width:25px;height:1px;background:#d0d0d0"></div>
<div class="a" style="left:26px;top:272px;width:704px;height:1px;background:#cfcfcf"></div>
<div class="a" style="left:0;top:272px;width:25px;height:1px;background:#d0d0d0"></div>
<div class="a" style="left:26px;top:289px;width:704px;height:1px;background:#cfcfcf"></div>
<div class="a" style="left:0;top:289px;width:25px;height:1px;background:#d0d0d0"></div>
<div class="a" style="left:26px;top:306px;width:704px;height:1px;background:#cfcfcf"></div>
<div class="a" style="left:0;top:306px;width:25px;height:1px;background:#d0d0d0"></div>
<div class="a" style="left:26px;top:323px;width:704px;height:1px;background:#cfcfcf"></div>
<div class="a" style="left:0;top:323px;width:25px;height:1px;background:#d0d0d0"></div>
<div class="a" style="left:26px;top:340px;width:704px;height:1px;background:#cfcfcf"></div>
<div class="a" style="left:0;top:340px;width:25px;height:1px;background:#d0d0d0"></div>
<div class="a" style="left:26px;top:357px;width:704px;height:1px;background:#cfcfcf"></div>
<div class="a" style="left:0;top:357px;width:25px;height:1px;background:#d0d0d0"></div>
<div class="a" style="left:26px;top:374px;width:704px;height:1px;background:#cfcfcf"></div>
<div class="a" style="left:0;top:374px;width:25px;height:1px;background:#d0d0d0"></div>
<div class="a" style="left:26px;top:391px;width:704px;height:1px;background:#cfcfcf"></div>
<div class="a" style="left:0;top:391px;width:25px;height:1px;background:#d0d0d0"></div>
<div class="a" style="left:26px;top:408px;width:704px;height:1px;background:#cfcfcf"></div>
<div class="a" style="left:0;top:408px;width:25px;height:1px;background:#d0d0d0"></div>
<div class="a" style="left:26px;top:425px;width:704px;height:1px;background:#cfcfcf"></div>
<div class="a" style="left:0;top:425px;width:25px;height:1px;background:#d0d0d0"></div>
<div class="t" style="left:37.0px;width:40px;text-align:center;top:3.2px;font-size:13.33px;color:#222">A</div>
<div class="t" style="left:101.0px;width:40px;text-align:center;top:3.2px;font-size:13.33px;color:#222">B</div>
<div class="t" style="left:165.0px;width:40px;text-align:center;top:3.2px;font-size:13.33px;color:#222">C</div>
<div class="t" style="left:229.0px;width:40px;text-align:center;top:3.2px;font-size:13.33px;color:#222">D</div>
<div class="t" style="left:293.0px;width:40px;text-align:center;top:3.2px;font-size:13.33px;color:#222">E</div>
<div class="t" style="left:357.0px;width:40px;text-align:center;top:3.2px;font-size:13.33px;color:#222">F</div>
<div class="t" style="left:421.0px;width:40px;text-align:center;top:3.2px;font-size:13.33px;color:#222">G</div>
<div class="t" style="left:485.0px;width:40px;text-align:center;top:3.2px;font-size:13.33px;color:#222">H</div>
<div class="t" style="left:549.0px;width:40px;text-align:center;top:3.2px;font-size:13.33px;color:#222">I</div>
<div class="t" style="left:613.0px;width:40px;text-align:center;top:3.2px;font-size:13.33px;color:#222">J</div>
<div class="t" style="left:677.0px;width:40px;text-align:center;top:3.2px;font-size:13.33px;color:#222">K</div>
<div class="t" style="left:0;width:26px;text-align:center;top:19.8px;font-size:13.33px;color:#222">1</div>
<div class="t" style="left:0;width:26px;text-align:center;top:36.8px;font-size:13.33px;color:#222">2</div>
<div class="t" style="left:0;width:26px;text-align:center;top:53.8px;font-size:13.33px;color:#222">3</div>
<div class="t" style="left:0;width:26px;text-align:center;top:70.8px;font-size:13.33px;color:#222">4</div>
<div class="t" style="left:0;width:26px;text-align:center;top:87.8px;font-size:13.33px;color:#222">5</div>
<div class="t" style="left:0;width:26px;text-align:center;top:104.8px;font-size:13.33px;color:#222">6</div>
<div class="t" style="left:0;width:26px;text-align:center;top:121.8px;font-size:13.33px;color:#222">7</div>
<div class="t" style="left:0;width:26px;text-align:center;top:138.8px;font-size:13.33px;color:#222">8</div>
<div class="t" style="left:0;width:26px;text-align:center;top:155.8px;font-size:13.33px;color:#222">9</div>
<div class="t" style="left:0;width:26px;text-align:center;top:172.8px;font-size:13.33px;color:#222">10</div>
<div class="t" style="left:0;width:26px;text-align:center;top:189.8px;font-size:13.33px;color:#222">11</div>
<div class="t" style="left:0;width:26px;text-align:center;top:206.8px;font-size:13.33px;color:#222">12</div>
<div class="t" style="left:0;width:26px;text-align:center;top:223.8px;font-size:13.33px;color:#222">13</div>
<div class="t" style="left:0;width:26px;text-align:center;top:240.8px;font-size:13.33px;color:#222">14</div>
<div class="t" style="left:0;width:26px;text-align:center;top:257.8px;font-size:13.33px;color:#222">15</div>
<div class="t" style="left:0;width:26px;text-align:center;top:274.8px;font-size:13.33px;color:#222">16</div>
<div class="t" style="left:0;width:26px;text-align:center;top:291.8px;font-size:13.33px;color:#222">17</div>
<div class="t" style="left:0;width:26px;text-align:center;top:308.8px;font-size:13.33px;color:#222">18</div>
<div class="t" style="left:0;width:26px;text-align:center;top:325.8px;font-size:13.33px;color:#222">19</div>
<div class="t" style="left:0;width:26px;text-align:center;top:342.8px;font-size:13.33px;color:#222">20</div>
<div class="t" style="left:0;width:26px;text-align:center;top:359.8px;font-size:13.33px;color:#222">21</div>
<div class="t" style="left:0;width:26px;text-align:center;top:376.8px;font-size:13.33px;color:#222">22</div>
<div class="t" style="left:0;width:26px;text-align:center;top:393.8px;font-size:13.33px;color:#222">23</div>
<div class="t" style="left:0;width:26px;text-align:center;top:410.8px;font-size:13.33px;color:#222">24</div>
<div class="a" style="left:729px;top:18px;width:1px;height:400px;background:#ababab"></div>
<div class="a" style="left:24px;top:16px;width:67px;height:19px;border:2px solid #217346"></div>
<div class="a" style="left:87px;top:31px;width:6px;height:6px;background:#217346;border:1px solid #fff"></div>
</div>

<!-- LOGO --><svg style="left:0;top:0" width="755" height="671" viewBox="0 0 755 671">
<defs>
 <path id="sw" d="M301.70 270.78 L295.52 270.37 L289.38 270.21 L283.28 270.30 L277.23 270.63 L271.25 271.20 L265.35 272.01 L259.52 273.05 L253.78 274.33 L248.15 275.83 L242.61 277.55 L237.20 279.49 L231.90 281.65 L226.74 284.01 L221.72 286.58 L216.85 289.35 L212.13 292.30 L207.58 295.44 L203.21 298.76 L199.01 302.24 L195.00 305.89 L191.19 309.69 L187.58 313.63 L184.17 317.71 L180.99 321.91 L178.03 326.23 L175.29 330.65 L172.79 335.17 L170.52 339.77 L168.49 344.43 L166.72 349.16 L165.19 353.93 L163.91 358.74 L162.89 363.57 L162.12 368.40 L161.61 373.22 L161.35 378.03 L161.35 382.80 L161.60 387.52 L162.09 392.17 L162.83 396.75 L163.81 401.24 L165.03 405.62 L166.47 409.88 L168.12 414.02 L169.99 418.01 L172.06 421.84 L174.31 425.51 L176.75 429.00 L179.36 432.30 L182.13 435.40 L185.04 438.30 L188.08 440.97 L191.25 443.43 L194.51 445.66 L197.87 447.64 L201.30 449.39 L204.79 450.89 L208.32 452.15 L211.86 453.17 L215.40 453.96 L218.91 454.51 L222.39 454.84 L225.81 454.96 L229.16 454.87 L232.42 454.59 L235.59 454.13 L238.64 453.51 L241.57 452.73 L244.37 451.81 L247.03 450.78 L249.55 449.64 L251.93 448.41 L254.15 447.11 L256.23 445.76 L258.15 444.37 L259.93 442.96 L261.57 441.54 L263.08 440.14 L264.46 438.76 L265.71 437.42 L266.87 436.13 L267.92 434.91 L268.89 433.76 L269.80 432.70 L270.66 431.74 L271.47 430.87 L272.28 430.10 L273.08 429.45 L273.90 428.90 L272.96 429.15 L272.03 429.39 L271.10 429.61 L270.17 429.82 L269.24 430.02 L268.31 430.20 L267.37 430.37 L266.43 430.53 L265.48 430.67 L264.52 430.81 L263.55 430.93 L262.56 431.04 L261.56 431.14 L260.55 431.22 L259.51 431.29 L258.45 431.33 L257.37 431.36 L256.27 431.36 L255.13 431.35 L253.98 431.30 L252.79 431.22 L251.57 431.12 L250.33 430.97 L249.06 430.79 L247.75 430.56 L246.42 430.29 L245.05 429.97 L243.66 429.59 L242.24 429.15 L240.79 428.66 L239.32 428.09 L237.83 427.46 L236.31 426.75 L234.78 425.97 L233.24 425.10 L231.68 424.15 L230.11 423.10 L228.55 421.97 L226.98 420.73 L225.42 419.40 L223.87 417.96 L222.34 416.42 L220.83 414.76 L219.35 413.00 L217.91 411.12 L216.51 409.13 L215.16 407.02 L213.86 404.79 L212.63 402.44 L211.47 399.98 L210.39 397.40 L209.40 394.70 L208.51 391.89 L207.72 388.96 L207.05 385.92 L206.50 382.77 L206.08 379.52 L205.79 376.16 L205.66 372.71 L205.69 369.16 L205.87 365.53 L206.24 361.82 L206.78 358.04 L207.51 354.19 L208.45 350.28 L209.58 346.32 L210.93 342.33 L212.50 338.30 L214.29 334.26 L216.32 330.22 L218.58 326.17 L221.09 322.15 L223.84 318.16 L226.85 314.22 L230.10 310.33 L233.61 306.53 L237.38 302.81 L241.40 299.19 L245.68 295.69 L250.21 292.33 L254.99 289.12 L260.02 286.08 L265.29 283.22 L270.81 280.56 L276.55 278.12 L282.52 275.91 L288.71 273.94 L295.11 272.23 Z"/>
 <radialGradient id="gG" gradientUnits="userSpaceOnUse" cx="264.7" cy="408.4" r="145">
  <stop offset="0" stop-color="#9cca5a"/><stop offset="0.3" stop-color="#8fc45c"/><stop offset="0.587" stop-color="#76b862"/><stop offset="0.593" stop-color="#409a43"/><stop offset="0.75" stop-color="#38923f"/><stop offset="1" stop-color="#52a748"/></radialGradient>
 <radialGradient id="gB" gradientUnits="userSpaceOnUse" cx="264.7" cy="408.4" r="145">
  <stop offset="0" stop-color="#94bfe0"/><stop offset="0.3" stop-color="#86b8de"/><stop offset="0.587" stop-color="#6eaadb"/><stop offset="0.593" stop-color="#3a8fcf"/><stop offset="0.8" stop-color="#2e87c8"/><stop offset="1" stop-color="#378ecf"/></radialGradient>
 <radialGradient id="gO" gradientUnits="userSpaceOnUse" cx="264.7" cy="408.4" r="145">
  <stop offset="0" stop-color="#f58c4a"/><stop offset="0.3" stop-color="#f7985a"/><stop offset="0.587" stop-color="#f9ab6a"/><stop offset="0.593" stop-color="#f68c3c"/><stop offset="0.8" stop-color="#f47826"/><stop offset="1" stop-color="#f26f22"/></radialGradient>
 <radialGradient id="gY" gradientUnits="userSpaceOnUse" cx="264.7" cy="408.4" r="145">
  <stop offset="0" stop-color="#efdc48"/><stop offset="0.3" stop-color="#ecd84c"/><stop offset="0.587" stop-color="#e6d35a"/><stop offset="0.593" stop-color="#d6c236"/><stop offset="0.8" stop-color="#c8b230"/><stop offset="1" stop-color="#b9a32a"/></radialGradient>
 <clipPath id="cp">
  <use href="#sw"/>
  <use href="#sw" transform="rotate(90 264.7 408.4)"/>
  <use href="#sw" transform="rotate(180 264.7 408.4)"/>
  <use href="#sw" transform="rotate(270 264.7 408.4)"/>
 </clipPath>
</defs>
<g fill="#fff" stroke="#fff" stroke-width="4.5" stroke-linejoin="round">
<use href="#sw"/>
<use href="#sw" transform="rotate(90 264.7 408.4)"/>
<use href="#sw" transform="rotate(180 264.7 408.4)"/>
<use href="#sw" transform="rotate(270 264.7 408.4)"/>
</g>
<use href="#sw" fill="url(#gG)"/>
<use href="#sw" fill="url(#gB)" transform="rotate(90 264.7 408.4)"/>
<use href="#sw" fill="url(#gO)" transform="rotate(180 264.7 408.4)"/>
<use href="#sw" fill="url(#gY)" transform="rotate(270 264.7 408.4)"/>

</svg><!-- /LOGO -->
<!-- vertical scrollbar -->
<div class="a" style="left:731px;top:200px;width:21px;height:418px;background:#e6e6e6"></div>
<div class="a" style="left:734px;top:203px;width:15px;height:415px;background:#dcdcdc;border:1px solid #c6c6c6"></div>
<div class="a" style="left:734px;top:203px;width:15px;height:15px;background:#fff;border:1px solid #c6c6c6"></div>
<div class="a" style="left:735px;top:218px;width:13px;height:368px;background:#fff;border-top:1px solid #c6c6c6;border-bottom:1px solid #c6c6c6"></div>
<div class="a" style="left:734px;top:604px;width:15px;height:14px;background:#fff;border:1px solid #c6c6c6"></div>
<svg style="left:738px;top:208px" width="8" height="4" viewBox="0 0 8 4"><path d="M0 4 H8 L4 0 Z" fill="#666"/></svg>
<svg style="left:738px;top:609px" width="8" height="4" viewBox="0 0 8 4"><path d="M0 0 H8 L4 4 Z" fill="#666"/></svg>

<!-- sheet tab bar -->
<div class="a" style="left:1px;top:618px;width:751px;height:28px;background:#e6e6e6;border-top:1px solid #c6c6c6"></div>
<svg style="left:28px;top:628px" width="4" height="7" viewBox="0 0 4 7"><path d="M4 0 V7 L0 3.5 Z" fill="#c0c0c0"/></svg>
<svg style="left:57px;top:628px" width="4" height="7" viewBox="0 0 4 7"><path d="M0 0 V7 L4 3.5 Z" fill="#c0c0c0"/></svg>
<div class="a" style="left:101px;top:618px;width:65px;height:25px;background:#fff;border-left:1px solid #ababab;border-right:1px solid #ababab;border-bottom:2px solid #217346"></div>
<div class="t" style="left:113px;top:625px;font-size:12px;font-weight:700;color:#217346">Sheet1</div>
<svg style="left:199px;top:624px" width="16" height="16" viewBox="0 0 16 16"><circle cx="8" cy="8" r="7.3" fill="none" stroke="#777" stroke-width="1.2"/><path d="M8 4 V12 M4 8 H12" stroke="#777" stroke-width="1.6"/></svg>
<div class="a" style="left:451px;top:628px;width:2px;height:2px;background:#b0b0b0"></div>
<div class="a" style="left:451px;top:632px;width:2px;height:2px;background:#b0b0b0"></div>
<div class="a" style="left:451px;top:636px;width:2px;height:2px;background:#b0b0b0"></div>
<div class="a" style="left:468px;top:625px;width:263px;height:15px;background:#dcdcdc;border:1px solid #c6c6c6"></div>
<div class="a" style="left:468px;top:625px;width:15px;height:15px;background:#fff;border:1px solid #c6c6c6"></div>
<div class="a" style="left:482px;top:625px;width:211px;height:15px;background:#fff;border:1px solid #c6c6c6"></div>
<div class="a" style="left:716px;top:625px;width:15px;height:15px;background:#fff;border:1px solid #c6c6c6"></div>
<svg style="left:473px;top:629px" width="4" height="7" viewBox="0 0 4 7"><path d="M4 0 V7 L0 3.5 Z" fill="#666"/></svg>
<svg style="left:722px;top:629px" width="4" height="7" viewBox="0 0 4 7"><path d="M0 0 V7 L4 3.5 Z" fill="#666"/></svg>

<!-- status bar -->
<div class="a" style="left:1px;top:646px;width:751px;height:22px;background:#f1f1f1;border-top:1px solid #c6c6c6"></div>
<div class="t" style="left:8px;top:652px;font-size:10.5px;color:#444">Ready</div>
<svg style="left:59px;top:650px" width="14" height="13" viewBox="0 0 14 13">
 <circle cx="3" cy="3" r="2.8" fill="#777"/>
 <path d="M6 1.5 H13.5 V12.5 H1.5 V6.5" fill="none" stroke="#777" stroke-width="1"/>
 <path d="M6 3.5 H13 V5 H6 Z" fill="#777"/>
 <path d="M3.5 7.5 H5 M6.5 7.5 H8 M9.5 7.5 H11 M3.5 9.5 H5 M6.5 9.5 H8 M9.5 9.5 H11" stroke="#777" stroke-width="1"/>
</svg>
<div class="a" style="left:449px;top:647px;width:38px;height:21px;background:#c8c8c8"></div>
<svg style="left:461px;top:650px" width="13" height="13" viewBox="0 0 13 13">
 <rect x="0.5" y="0.5" width="12" height="12" fill="none" stroke="#5a5a5a" stroke-width="1.2"/>
 <path d="M4.5 0.5 V12.5 M8.5 0.5 V12.5 M0.5 4.5 H12.5 M0.5 8.5 H12.5" stroke="#5a5a5a" stroke-width="1.2"/>
</svg>
<svg style="left:499px;top:650px" width="14" height="13" viewBox="0 0 14 13">
 <rect x="0.5" y="0.5" width="13" height="12" fill="none" stroke="#666" stroke-width="1"/>
 <rect x="3.5" y="2.5" width="7" height="8" fill="none" stroke="#666" stroke-width="1"/>
 <path d="M5 5 H9 M5 7 H9 M5 9 H9" stroke="#666" stroke-width="1"/>
</svg>
<svg style="left:537px;top:650px" width="14" height="13" viewBox="0 0 14 13">
 <rect x="0.5" y="0.5" width="13" height="12" fill="none" stroke="#666" stroke-width="1"/>
 <path d="M0.5 7.5 H7.5 V0.5 M4 0.5 V7.5" fill="none" stroke="#666" stroke-width="1"/>
</svg>
<div class="a" style="left:568px;top:656px;width:6px;height:2px;background:#555"></div>
<div class="a" style="left:578px;top:656px;width:100px;height:1px;background:#b0b0b0"></div>
<div class="a" style="left:626px;top:650px;width:4px;height:12px;background:#666"></div>
<svg style="left:681px;top:652px" width="9" height="9" viewBox="0 0 9 9"><path d="M4.5 0 V9 M0 4.5 H9" stroke="#555" stroke-width="1.8"/></svg>
<div class="t" style="left:706px;top:652px;font-size:10.5px;color:#555">100%</div>

</body></html>
